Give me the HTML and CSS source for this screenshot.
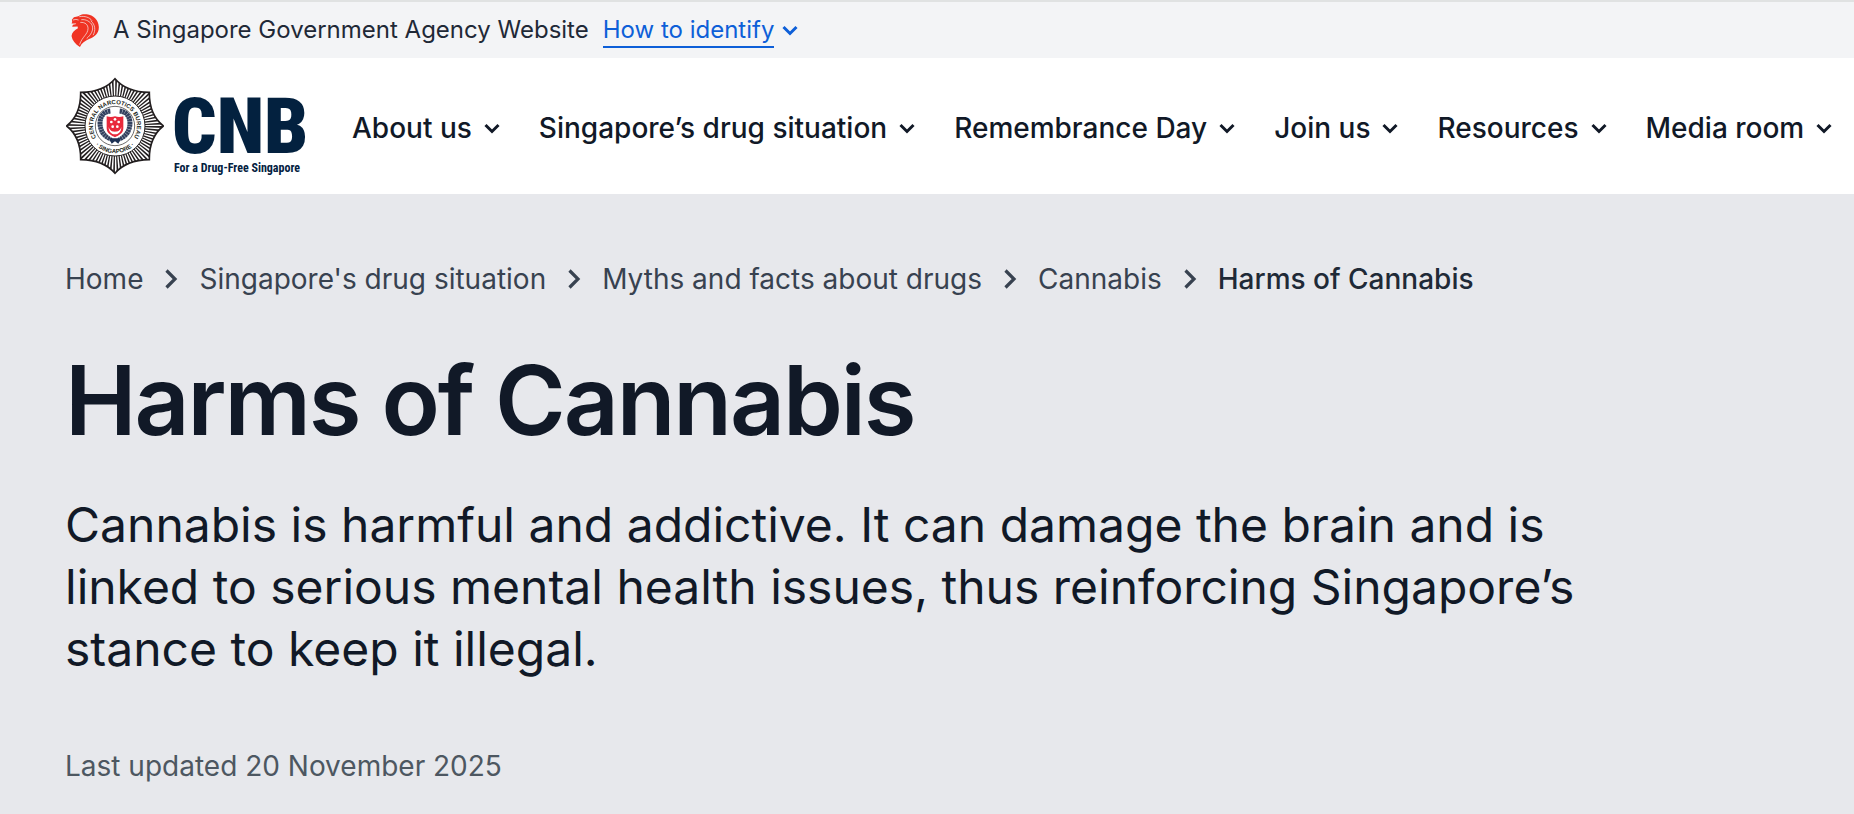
FILE: index.html
```
<!DOCTYPE html>
<html lang="en">

<head>
    <title>Harms of Cannabis</title>
    <meta charset="UTF-8">
    <meta name="viewport" content="width=device-width, initial-scale=1.0">
    <link rel="stylesheet" href="styles.css">
</head>

<body>
    <svg width="0" height="0" class="sprite" aria-hidden="true">
        <symbol id="chevron-down" viewBox="0 0 24 24">
            <path d="M5.5 9 12 15.500l6.500-6.500" fill="none" stroke="currentColor" stroke-width="3" />
        </symbol>
        <symbol id="chevron-right" viewBox="0 0 24 24">
            <path d="M7.500 3.500 16 12 7.500 20.500" fill="none" stroke="currentColor" stroke-width="3.200" />
        </symbol>
    </svg>

    <div class="masthead">
        <svg class="lion" viewBox="0 0 82 98" aria-hidden="true">
            <path fill="#f03323" d="M2 17 8 10 21 7C27 1 37 0 46 1 66 3 81 18 82 38 83 57 70 68 53 74 41 79 31 86 26 98 12 89 3 78 1 65 2 55 10 47 20 42L19 37 3 38 5 32 15 30 14 28 1 28 3 24Z" />
            <g fill="none" stroke="#f3f4f6" stroke-width="2">
                <path d="M5 18 14 16 22 18" />
                <path d="M24 8C40 5 55 10 62 20" />
                <path d="M30 17C44 15 57 23 62 33 68 49 57 63 46 73" />
                <path d="M27 25C42 24 50 32 50 43 50 60 32 68 25 91" />
                <path d="M58 20C72 32 73 49 65 63" />
            </g>
        </svg>
        <span>A Singapore Government Agency Website</span>
        <button type="button" class="identify">
            <span class="identify-text">How to identify</span>
            <svg class="icon"><use href="#chevron-down" /></svg>
        </button>
    </div>

    <header class="header">
        <a href="#" class="logo" aria-label="Central Narcotics Bureau">
            <svg class="badge" viewBox="-147 -147 294 294" aria-hidden="true">
                <defs>
                    <path id="star" d="M0-142Q34-102 103-101Q102-34 145 0Q102 34 103 101Q34 102 0 142Q-34 102-103 101Q-102 34-145 0Q-102-34-103-101Q-34-102 0-142Z" />
                    <clipPath id="starClip"><use href="#star" /></clipPath>
                    <path id="arcTop" d="M-54 38A66 66 0 1 1 54 38" />
                    <path id="arcBottom" d="M-74 35A82 82 0 0 0 74 35" />
                </defs>
                <use href="#star" fill="#fff" stroke="#231f20" stroke-width="5" />
                <circle r="120" fill="none" stroke="#231f20" stroke-width="60" pathLength="160" stroke-dasharray="1 1" clip-path="url(#starClip)" />
                <circle r="90" fill="#fff" stroke="#231f20" stroke-width="3" />
                <circle r="59" fill="#fff" stroke="#231f20" stroke-width="2" />
                <text class="badge-text"><textPath href="#arcTop" startOffset="50%">CENTRAL NARCOTICS BUREAU</textPath></text>
                <text class="badge-text"><textPath href="#arcBottom" startOffset="50%">· SINGAPORE ·</textPath></text>
                <g fill="none" stroke="#33415f" stroke-width="15" stroke-dasharray="7 1">
                    <path d="M-14-45C-42-42-51-14-41 12-36 26-24 35-9 40" />
                    <path d="M14-45C42-42 51-14 41 12 36 26 24 35 9 40" />
                </g>
                <path fill="#fff" d="M-30-32H30V10C28 28 12 35 0 39-12 35-28 28-30 10Z" />
                <path fill="#1d3154" d="M-18 37H18L10 53 0 46-10 53Z" />
                <path fill="#e8293b" d="M-25-29Q-12-25 0-29 12-25 25-29V7C25 23 10 29 0 34-10 29-25 23-25 7Z" />
                <path fill="#fff" d="M-19 3C-16 14-8 17 0 17S16 14 19 3C19 18 10 25 0 25S-19 18-19 3Z" />
                <g fill="#fff">
                    <circle cy="-20" r="4" />
                    <circle cx="-11" cy="-12" r="4" />
                    <circle cx="11" cy="-12" r="4" />
                    <circle cx="-7" cy="2" r="4" />
                    <circle cx="7" cy="2" r="4" />
                </g>
            </svg>
            <span class="wordmark">
                <span class="wordmark-name">CNB</span>
                <span class="wordmark-tagline">For a Drug-Free Singapore</span>
            </span>
        </a>
        <nav class="nav">
            <button type="button">About us <svg class="icon"><use href="#chevron-down" /></svg></button>
            <button type="button">Singapore’s drug situation <svg class="icon"><use href="#chevron-down" /></svg></button>
            <button type="button">Remembrance Day <svg class="icon"><use href="#chevron-down" /></svg></button>
            <button type="button">Join us <svg class="icon"><use href="#chevron-down" /></svg></button>
            <button type="button">Resources <svg class="icon"><use href="#chevron-down" /></svg></button>
            <button type="button">Media room <svg class="icon"><use href="#chevron-down" /></svg></button>
        </nav>
    </header>

    <main class="content">
        <nav class="breadcrumb" aria-label="Breadcrumb">
            <a href="#">Home</a>
            <svg class="icon"><use href="#chevron-right" /></svg>
            <a href="#">Singapore's drug situation</a>
            <svg class="icon"><use href="#chevron-right" /></svg>
            <a href="#">Myths and facts about drugs</a>
            <svg class="icon"><use href="#chevron-right" /></svg>
            <a href="#">Cannabis</a>
            <svg class="icon"><use href="#chevron-right" /></svg>
            <a href="#" class="current" aria-current="page">Harms of Cannabis</a>
        </nav>
        <h1>Harms of Cannabis</h1>
        <p class="summary">Cannabis is harmful and addictive. It can damage the brain and is linked to serious mental health issues, thus reinforcing Singapore’s stance to keep it illegal.</p>
        <p class="updated">Last updated 20 November 2025</p>
    </main>
</body>

</html>
```

FILE: styles.css
```
* {
    box-sizing: border-box;
}
body {
    font-family: Inter, "Liberation Sans", sans-serif;
    margin: 0;
    min-height: 100vh;
    background: #e7e8ec;
    color: #111927;
}
button {
    font: inherit;
    color: inherit;
    background: none;
    border: none;
    padding: 0;
    cursor: pointer;
}
a {
    color: inherit;
    text-decoration: none;
}
.sprite {
    display: block;
}
.icon {
    width: 24px;
    height: 24px;
    flex: none;
}
.masthead {
    display: flex;
    align-items: center;
    padding: 0 65px;
    height: 58px;
    border-top: 2px solid #e0e2e2;
    background: #f3f4f6;
    color: #1f2937;
    font-size: 24px;
    line-height: 32px;
}
.lion {
    width: 28px;
    height: 33px;
    margin: 0 14px 0 6px;
}
.identify {
    display: flex;
    align-items: center;
    gap: 4px;
    margin-left: 14px;
    color: #0d5fd8;
}
.identify-text {
    padding-top: 2px;
    border-bottom: 2px solid #0d5fd8;
}
.header {
    display: flex;
    align-items: center;
    padding: 0 16px 0 66px;
    height: 136px;
    background: #fff;
}
.logo {
    display: flex;
    align-items: center;
    flex: none;
    gap: 8px;
    margin-right: 48px;
    color: #03213f;
}
.badge {
    width: 98px;
    height: 98px;
}
.badge-text {
    font: bold 18px "Liberation Sans", sans-serif;
    fill: #231f20;
    text-anchor: middle;
}
.wordmark {
    display: flex;
    flex-direction: column;
    width: 132px;
    padding-top: 14px;
    font-family: "Liberation Sans Narrow", "Roboto Condensed", "Open Sans Condensed", "Liberation Sans", sans-serif;
    font-weight: bold;
}
.wordmark-name {
    font-size: 78px;
    font-weight: 900;
    line-height: 70px;
}
.wordmark-tagline {
    padding-left: 2px;
    font-size: 12px;
    line-height: 12px;
    white-space: nowrap;
}
.nav {
    display: flex;
    gap: 35px;
    padding-top: 4px;
    font-size: 28px;
    font-weight: 500;
    line-height: 36px;
    white-space: nowrap;
}
.nav button {
    display: flex;
    align-items: center;
    gap: 8px;
}
.content {
    padding: 65px 65px 32px;
}
.breadcrumb {
    display: flex;
    align-items: center;
    gap: 16px;
    color: #384250;
    font-size: 28px;
    line-height: 40px;
}
.breadcrumb .current {
    color: #1f2a37;
    font-weight: 500;
}
h1 {
    margin: 45px 0 0;
    font-size: 96px;
    font-weight: 600;
    line-height: 112px;
    letter-spacing: -0.022em;
}
.summary {
    max-width: 1536px;
    margin: 38px 0 0;
    font-size: 48px;
    line-height: 62px;
}
.updated {
    margin: 66px 0 0;
    color: #4d5761;
    font-size: 28px;
    line-height: 40px;
}
```
